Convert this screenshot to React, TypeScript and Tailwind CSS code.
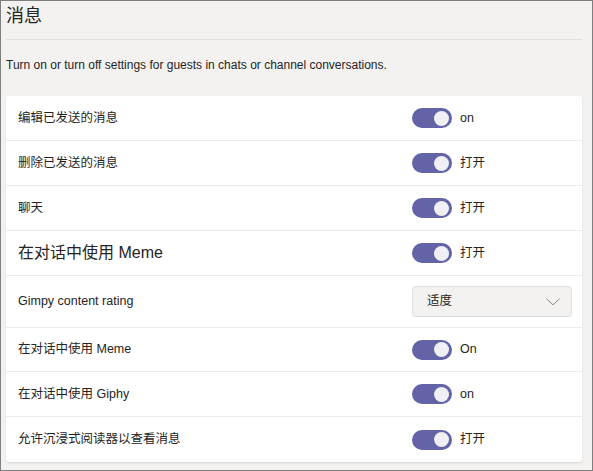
type Row =
  | { label: string; kind: "toggle"; state: string; h: string; big?: boolean }
  | { label: string; kind: "select"; value: string; h: string };

const ROWS: Row[] = [
  { label: "编辑已发送的消息", kind: "toggle", state: "on", h: "h-[44px]" },
  { label: "删除已发送的消息", kind: "toggle", state: "打开", h: "h-[45px]" },
  { label: "聊天", kind: "toggle", state: "打开", h: "h-[45px]" },
  { label: "在对话中使用 Meme", kind: "toggle", state: "打开", h: "h-[45px]", big: true },
  { label: "Gimpy content rating", kind: "select", value: "适度", h: "h-[52px]" },
  { label: "在对话中使用 Meme", kind: "toggle", state: "On", h: "h-[44px]" },
  { label: "在对话中使用 Giphy", kind: "toggle", state: "on", h: "h-[45px]" },
  { label: "允许沉浸式阅读器以查看消息", kind: "toggle", state: "打开", h: "h-[46px]" },
];

function Toggle() {
  return (
    <div className="flex h-[20px] w-[40px] items-center justify-end rounded-full bg-[#6264a7] pr-[3px]">
      <div className="h-[15px] w-[15px] rounded-full bg-[#f0eff4]" />
    </div>
  );
}

export default function App() {
  return (
    <div
      className="h-[471px] w-[593px] overflow-hidden border border-[#7f7f7f] bg-[#f3f2f1] pl-[5px] pr-[10px] text-[#252423]"
      style={{ fontFamily: '"Liberation Sans", "Noto Sans CJK SC", sans-serif' }}
    >
      <div className="h-[39px] border-b border-[#e1dfdd] pt-[3px] text-[18px] leading-[24px]">消息</div>
      <p className="pt-[17px] text-[12px] leading-[16px]">
        Turn on or turn off settings for guests in chats or channel conversations.
      </p>

      <div className="mt-[23px] rounded-[3px] bg-white shadow-[0_1px_2px_rgba(0,0,0,0.12)]">
        {ROWS.map((row, i) => (
          <div
            key={i}
            className={`flex items-center ${row.h} ${i > 0 ? "border-t border-[#edebe9]" : ""}`}
          >
            <div className={`flex-1 pl-[12px] ${"big" in row && row.big ? "text-[16px]" : "text-[12.5px]"}`}>
              {row.label}
            </div>
            <div className="flex w-[170px] items-center pr-[10px]">
              {row.kind === "toggle" ? (
                <>
                  <Toggle />
                  <span className="ml-[8px] text-[12.5px]">{row.state}</span>
                </>
              ) : (
                <div className="flex h-[31px] w-[160px] items-center justify-between rounded-[3px] border border-[#e1dfdd] bg-[#f3f2f1] pl-[14px] pr-[11px] text-[12.5px]">
                  <span>{row.value}</span>
                  <svg width="14" height="8" viewBox="0 0 14 8" fill="none">
                    <path d="M0.5 0.8 L7 6.8 L13.5 0.8" stroke="#8a8886" strokeWidth="1" />
                  </svg>
                </div>
              )}
            </div>
          </div>
        ))}
      </div>
    </div>
  );
}
